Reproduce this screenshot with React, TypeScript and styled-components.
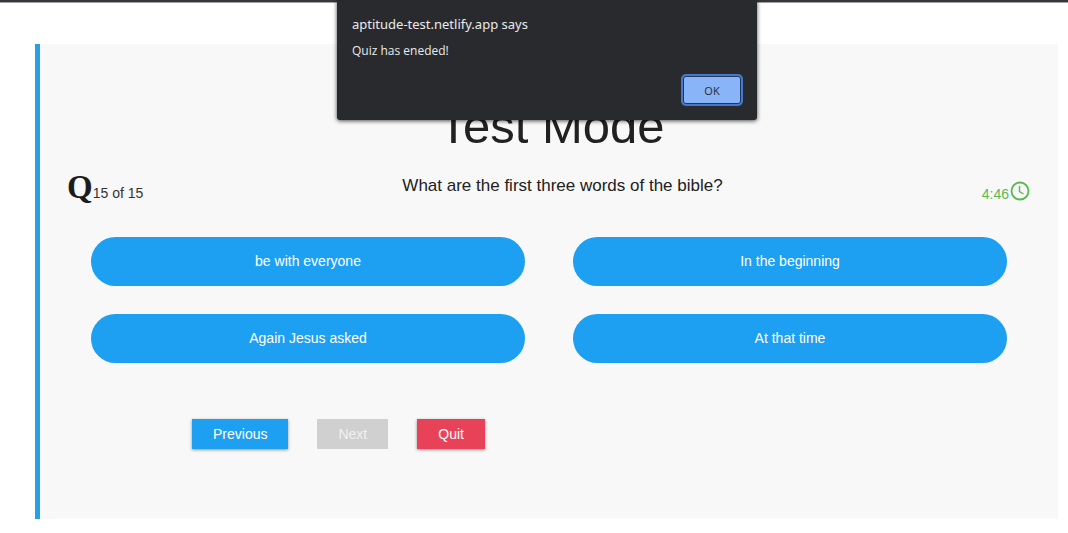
import React from "react";
import styled, { createGlobalStyle } from "styled-components";

const GlobalStyle = createGlobalStyle`
  *, *::before, *::after { box-sizing: border-box; }
  body {
    margin: 0;
    background: #fff;
    color: #212121;
    font-family: "Liberation Sans", Arial, sans-serif;
  }
`;

const Page = styled.div`
  border-top: 2px solid #37363b;
  box-shadow: inset 0 1px 0 #a0a0a2;
  padding: 42px 10px 14px 35px;
`;

const Panel = styled.main`
  background: #f8f8f8;
  border-left: 5px solid #2c9fe3;
  padding: 56px 28px 70px 27px;
`;

const Title = styled.h1`
  margin: 0;
  padding-left: 6px;
  font-size: 49px;
  line-height: 52px;
  font-weight: 400;
  text-align: center;
`;

const StatusRow = styled.header`
  display: flex;
  justify-content: space-between;
  height: 40px;
  margin-top: 18px;
`;

const Counter = styled.div`
  display: flex;
  align-items: baseline;
  color: #333;
  font-size: 14px;
  line-height: 34px;
`;

const Letter = styled.span`
  color: #1c1c1c;
  font-family: "Liberation Serif", "Times New Roman", serif;
  font-size: 33px;
  font-weight: 700;
`;

const Question = styled.h2`
  margin: 0;
  font-size: 17px;
  line-height: 32px;
  font-weight: 400;
`;

const Timer = styled.div`
  display: flex;
  justify-content: flex-end;
  gap: 1px;
  color: #5cb850;
  font-size: 14px;
  line-height: 48px;

  svg { margin-top: 11px; }
`;

const Options = styled.div`
  display: grid;
  grid-template-columns: 1fr 1fr;
  gap: 28px 48px;
  margin-top: 27px;
  padding: 0 23px 0 24px;
`;

const Option = styled.button`
  height: 49px;
  padding: 0 6px 2px;
  border: 0;
  border-radius: 25px;
  background: #1ea0f2;
  color: #fff;
  font: 14px "Liberation Sans", Arial, sans-serif;
  cursor: pointer;
`;

const Actions = styled.nav`
  display: flex;
  gap: 29px;
  margin-top: 56px;
  padding-left: 125px;
`;

const Action = styled.button<{ $color: string }>`
  height: 30px;
  padding: 0 21px;
  border: 0;
  background: ${(p) => p.$color};
  color: #fff;
  font: 14px "Liberation Sans", Arial, sans-serif;
  box-shadow: 0 1px 3px rgba(0, 0, 0, 0.4);
  cursor: pointer;

  &:disabled {
    color: #f1f1f1;
    box-shadow: none;
    cursor: default;
  }
`;

const Alert = styled.div`
  position: absolute;
  top: 0;
  left: calc(50% + 13px);
  transform: translateX(-50%);
  display: flex;
  flex-direction: column;
  width: 420px;
  padding: 14px 15px 16px;
  border-radius: 0 0 3px 3px;
  background: #292a2d;
  color: #e8eaed;
  font-family: "Noto Sans", "Segoe UI", sans-serif;
  box-shadow: 0 1px 4px rgba(0, 0, 0, 0.7);
`;

const AlertTitle = styled.h2`
  margin: 0;
  font-size: 13px;
  line-height: 20px;
  font-weight: 400;
`;

const AlertText = styled.p`
  margin: 8px 0 16px;
  font-family: "Open Sans", "Segoe UI", sans-serif;
  font-size: 12px;
  line-height: 18px;
`;

const AlertButton = styled.button`
  align-self: flex-end;
  width: 58px;
  height: 28px;
  margin-right: 1px;
  border: 1px solid #1f3763;
  border-radius: 3px;
  background: #8ab4f8;
  color: #292a2d;
  font: 11px "Open Sans", "Segoe UI", sans-serif;
  box-shadow: 0 0 0 2px #4779c8;
`;

const options = ["be with everyone", "In the beginning", "Again Jesus asked", "At that time"];

export default function App() {
  return (
    <>
      <GlobalStyle />
      <Page>
        <Panel>
          <Title>Test Mode</Title>
          <StatusRow>
            <Counter>
              <Letter>Q</Letter>
              <span>15 of 15</span>
            </Counter>
            <Question>What are the first three words of the bible?</Question>
            <Timer>
              <span>4:46</span>
              <svg width="20" height="20" viewBox="0 0 20 20" fill="none" stroke="currentColor" aria-hidden="true">
                <circle cx="10" cy="10" r="8.5" strokeWidth="1.8" />
                <path d="M9.5 5v5.5l4 2.5" strokeWidth="1.4" />
              </svg>
            </Timer>
          </StatusRow>
          <Options>
            {options.map((text) => (
              <Option key={text} type="button">{text}</Option>
            ))}
          </Options>
          <Actions>
            <Action type="button" $color="#1ea0f2">Previous</Action>
            <Action type="button" $color="#d0d0d0" disabled>Next</Action>
            <Action type="button" $color="#e84258">Quit</Action>
          </Actions>
        </Panel>
      </Page>
      <Alert role="alertdialog" aria-labelledby="alert-title" aria-describedby="alert-text">
        <AlertTitle id="alert-title">aptitude-test.netlify.app says</AlertTitle>
        <AlertText id="alert-text">Quiz has eneded!</AlertText>
        <AlertButton type="button">OK</AlertButton>
      </Alert>
    </>
  );
}
